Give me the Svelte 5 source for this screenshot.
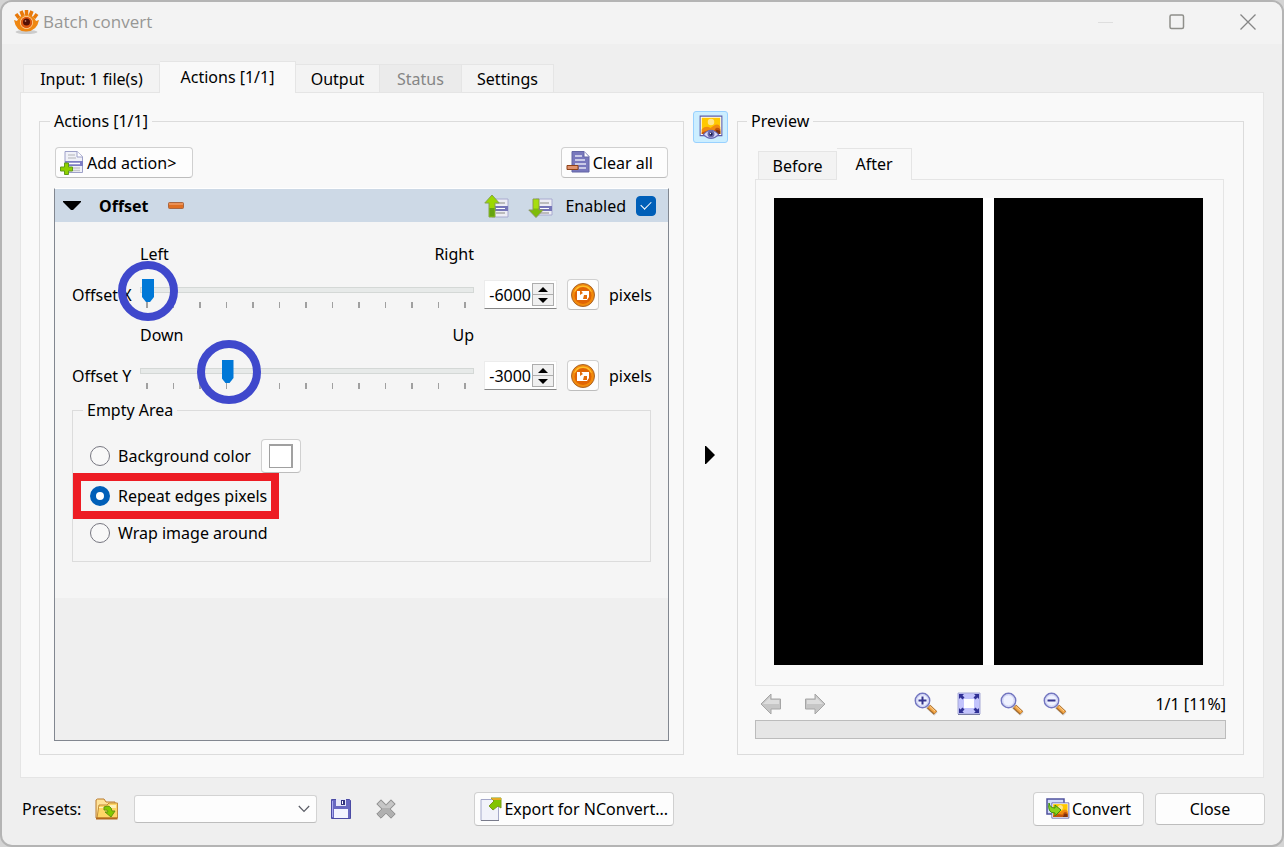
<script>
  let offsets = $state([
    { name: 'Offset X', low: 'Left', high: 'Right', value: -6000, mark: 'mark-x' },
    { name: 'Offset Y', low: 'Down', high: 'Up', value: -3000, mark: 'mark-y' }
  ]);
  let enabled = $state(true);
  let fill = $state('repeat');
  const ticks = Array.from({ length: 13 });
</script>

{#snippet page()}
  <path d="M5 1.5h12l5.5 5V22.500H5z" fill="#f0f1f8" stroke="#9da0c8" />
  <path d="M17 1.500V7h5.500" fill="#fff" stroke="#9da0c8" />
  <path d="M8 5h7M8 8h8M8 18h12M8 20.500h12" stroke="#c6c7cc" stroke-width="1.500" />
  <path d="M5 11h18v5H5z" fill="#7d7dc4" />
  <path d="M7 13.500h13" stroke="#fff" stroke-width="1.500" />
{/snippet}

{#snippet lens(sign)}
  <svg width="24" height="24" viewBox="0 0 24 24" fill="none" aria-hidden="true">
    <path d="M13 14l9 8" stroke="#d5d5d8" stroke-width="5" />
    <path d="M14.500 14.500l7 6.500" stroke="#a56b2b" stroke-width="5" />
    <path d="M15 14.500l6.500 6" stroke="#f2a443" stroke-width="3" />
    <path d="M16 14.500l5 4.600" stroke="#ffd69b" />
    <circle cx="8.500" cy="8.500" r="7.200" fill="#eff2ff" stroke="#7376c0" stroke-width="1.500" />
    <circle cx="8.500" cy="8.500" r="5.700" stroke="#c9cdf3" />
    {#if sign !== 'none'}<path d="M4.500 8.500h8" stroke="#35358d" stroke-width="2" />{/if}
    {#if sign === 'plus'}<path d="M8.500 4.500v8" stroke="#35358d" stroke-width="2" />{/if}
  </svg>
{/snippet}

{#snippet scene()}
  <path d="M1 1h20v18H1z" fill="#fff" stroke="#5d5da8" />
  <path d="M2.500 2.500h17v15h-17z" fill="#ffc800" />
  <circle cx="11" cy="6.500" r="3" fill="#ffe58a" />
  <path d="M2.500 13q4-4 8-1l3-2q4-3 6 1v6.500h-17z" fill="#f08a10" />
  <path d="M2.500 16l6-2 5 1 2-3q2-1 4 1v4.500h-17z" fill="#c4550c" />
  <path d="M14 17.500l2-4 3.500 1v3z" fill="#7e3410" />
{/snippet}

<div class="window">
  <header>
    <svg class="logo" width="25" height="26" viewBox="0 0 25 26" aria-hidden="true">
      <ellipse cx="12.500" cy="23" rx="11" ry="2" fill="#ccc" />
      <path d="M2 5l3 4M7 2l2 5M12.500 1v5M18 2l-2 5M23 5l-3 4" stroke="#e8790a" stroke-width="3.500" />
      <path d="M0 11l3 1Q5 6 12.500 6T22 12l3-1Q23 22 12.500 22.500T0 11z" fill="#ef8712" />
      <circle cx="12.500" cy="13.500" r="6.500" fill="#ffd9a0" />
      <circle cx="12.500" cy="13.500" r="5.700" fill="#dd5810" />
      <circle cx="12.500" cy="13" r="3.500" fill="#541006" />
      <circle cx="11.500" cy="12" r=".8" fill="#e6a484" />
    </svg>
    <h1>Batch convert</h1>
    <div class="wincontrols">
      <button aria-label="Minimize" disabled><svg width="16" height="16" viewBox="0 0 16 16"><path d="M0 8.500h15" stroke="#dedede" /></svg></button>
      <button aria-label="Maximize"><svg width="16" height="16" viewBox="0 0 16 16"><rect x="1" y="1" width="13.500" height="13.500" rx="1.500" fill="none" stroke="#8f8f8a" stroke-width="1.500" /></svg></button>
      <button aria-label="Close window"><svg width="16" height="16" viewBox="0 0 16 16"><path d="M.5.5l15 15M15.500.5l-15 15" stroke="#858585" stroke-width="1.300" /></svg></button>
    </div>
  </header>

  <main>
    <div class="tabs" role="tablist">
      <button role="tab" class="t1">Input: 1 file(s)</button>
      <button role="tab" class="t2 active" aria-selected="true">Actions [1/1]</button>
      <button role="tab" class="t3">Output</button>
      <button role="tab" class="t4" disabled>Status</button>
      <button role="tab" class="t5">Settings</button>
    </div>

    <div class="pane">
      <fieldset class="group actions">
        <legend>Actions [1/1]</legend>
        <div class="bar">
          <button class="btn">
            <svg width="25" height="25" viewBox="0 0 25 25" fill="none" aria-hidden="true">
              {@render page()}
              <path d="M4.500 13h4v4h4v4h-4v3.500h-4V21h-4v-4h4z" fill="#8fd000" stroke="#5f9a1a" />
            </svg>Add action&gt;
          </button>
          <button class="btn clear">
            <svg width="25" height="25" viewBox="0 0 25 25" fill="none" aria-hidden="true">
              <path d="M6 1.500h12l5 5V22H6z" fill="#7878bd" stroke="#6365a5" />
              <path d="M18 1.500V7h5" fill="#fff" stroke="#6365a5" />
              <path d="M9 6h7M9 10h10M9 14h11M13 18h7" stroke="#e4e5f5" stroke-width="1.500" />
              <path d="M1 15.500h11v4H1z" fill="#e0936f" stroke="#8e4218" />
            </svg>Clear all
          </button>
        </div>

        <div class="list">
          <div class="head">
            <button class="plain fold" aria-label="Collapse"><svg width="18" height="10" viewBox="0 0 18 10"><path d="M0 0h18v1l-8 8H8L0 1z" /></svg></button>
            <strong>Offset</strong>
            <button class="plain remove" aria-label="Remove action"><svg width="16" height="7" viewBox="0 0 16 7"><rect x=".5" y=".5" width="15" height="6" rx="1" fill="#df6f22" stroke="#a86742" /><path d="M1 2h14" stroke="#f6b287" /></svg></button>
            <span class="grow"></span>
            <button class="plain" aria-label="Move up">
              <svg width="26" height="24" viewBox="0 0 26 24" fill="none">
                <path d="M8 5h16v18H8z" fill="#ededf4" stroke="#a8aad0" /><path d="M12 9h9M12 19h9" stroke="#bcbcbc" stroke-width="2" /><path d="M10 12h14v5H10z" fill="#7676b8" /><path d="M12 14.500h9" stroke="#fff" />
                <path d="M5 23V9H.8L8 1l7.200 8H11v14z" fill="#9bd800" stroke="#84a34a" /><path d="M5.500 14h5v8.500h-5z" fill="#65a410" />
              </svg>
            </button>
            <button class="plain down" aria-label="Move down">
              <svg width="26" height="24" viewBox="0 0 26 24" fill="none">
                <path d="M8 5h16v16H8z" fill="#ededf4" stroke="#a8aad0" /><path d="M12 9h9M12 19h9" stroke="#bcbcbc" stroke-width="2" /><path d="M10 12h14v5H10z" fill="#7676b8" /><path d="M12 14.500h9" stroke="#fff" />
                <path d="M5 5v11H.8L8 23.500l7.200-7.500H11V5z" fill="#7ebc08" stroke="#8a9560" /><path d="M5.500 5.500h5v9h-5z" fill="#a7dd10" />
              </svg>
            </button>
            <label class="enabled">Enabled <input type="checkbox" bind:checked={enabled} /></label>
          </div>

          <div class="body">
            {#each offsets as o, i}
              <div class="offset">
                <div class="ends"><span>{o.low}</span><span>{o.high}</span></div>
                <label class="name" for="slider{i}">{o.name}</label>
                <div class="slide">
                  <input id="slider{i}" type="range" min="-6000" max="6000" bind:value={o.value} />
                  <div class="ticks">{#each ticks as _}<i></i>{/each}</div>
                  <span class="mark {o.mark}"></span>
                </div>
                <div class="spin">
                  <input type="number" aria-label="{o.name} in pixels" bind:value={o.value} />
                  <div class="steps">
                    <button aria-label="Increase {o.name}" onclick={() => (o.value += 1)}><svg width="10" height="5" viewBox="0 0 10 5"><path d="M5 0l5 5H0z" /></svg></button>
                    <button aria-label="Decrease {o.name}" onclick={() => (o.value -= 1)}><svg width="10" height="5" viewBox="0 0 10 5"><path d="M0 0h10L5 5z" /></svg></button>
                  </div>
                </div>
                <button class="btn reset" aria-label="Reset {o.name}" onclick={() => (o.value = 0)}>
                  <svg width="26" height="26" viewBox="0 0 26 26">
                    <circle cx="13" cy="13" r="11.500" fill="#f28a0c" stroke="#a9642a" />
                    <path d="M4 10a9.500 9.500 0 0 1 18 0q-9-4-18 0z" fill="#ffc02a" />
                    <circle cx="13" cy="13.500" r="8.500" fill="#e06405" />
                    <path d="M7 9h3v2l2-2h7v6l-2 3H7z" fill="#fff" />
                    <path d="M10 8l3 3-3 2zM14 13h3v4h-4z" fill="#e36b09" />
                  </svg>
                </button>
                <span>pixels</span>
              </div>
            {/each}

            <fieldset class="group empty">
              <legend>Empty Area</legend>
              <div class="option bg">
                <label><input type="radio" value="color" bind:group={fill} />Background color</label>
                <button class="btn swatch" aria-label="Choose background color"><i></i></button>
              </div>
              <div class="option marked"><label><input type="radio" value="repeat" bind:group={fill} />Repeat edges pixels</label></div>
              <div class="option"><label><input type="radio" value="wrap" bind:group={fill} />Wrap image around</label></div>
            </fieldset>
          </div>
        </div>
      </fieldset>

      <div class="splitter">
        <button class="toggle" aria-label="Show preview">
          <svg width="24" height="25" viewBox="0 0 22 23" fill="none">
            {@render scene()}
            <path d="M4 18q7-8 14 0q-7 7-14 0z" fill="#d6d8f8" stroke="#6868b4" />
            <circle cx="11" cy="17.500" r="3.200" fill="#6868ad" /><circle cx="11" cy="17.500" r="1.500" fill="#171747" />
            <circle cx="10.500" cy="17" r=".6" fill="#fff" />
          </svg>
        </button>
        <button class="plain expand" aria-label="Hide preview"><svg width="10" height="18" viewBox="0 0 10 18"><path d="M0 0h1l9 9-9 9H0z" /></svg></button>
      </div>

      <fieldset class="group preview">
        <legend>Preview</legend>
        <div class="tabs" role="tablist">
          <button role="tab" class="t6">Before</button>
          <button role="tab" class="t7 active" aria-selected="true">After</button>
        </div>
        <div class="view"><div class="picture"><i></i><i></i></div></div>
        <div class="tools">
          <button class="plain" aria-label="Previous" disabled><svg width="22" height="22" viewBox="0 0 22 22"><path d="M1 11L11 1v5h9.500v10H11v5z" fill="#c6c6c6" stroke="#a6a6a6" /><path d="M3 11l7-7v3h9v4z" fill="#ddd" /></svg></button>
          <button class="plain next" aria-label="Next" disabled><svg width="22" height="22" viewBox="0 0 22 22"><path d="M21 11L11 1v5H1.500v10H11v5z" fill="#c6c6c6" stroke="#a6a6a6" /><path d="M19 11l-7-7v3H3v4z" fill="#ddd" /></svg></button>
          <div class="zoom">
            <button class="plain" aria-label="Zoom in">{@render lens('plus')}</button>
            <button class="plain" aria-label="Fit">
              <svg width="24" height="24" viewBox="0 0 24 24">
                <path d="M1 1h22v21H1z" fill="#c3c4fc" stroke="#a7aad5" /><path d="M1 22.500h22" stroke="#777ba2" />
                <path d="M7 7h10v9H7z" fill="#fff" />
                <path d="M2 2h5L5.500 3.500l2 2-2 2-2-2L2 7zM22 2h-5l1.500 1.500-2 2 2 2 2-2L22 7zM2 21h5l-1.500-1.500 2-2-2-2-2 2L2 16zM22 21h-5l1.500-1.500-2-2 2-2 2 2L22 16z" fill="#303095" />
              </svg>
            </button>
            <button class="plain" aria-label="Actual size">{@render lens('none')}</button>
            <button class="plain" aria-label="Zoom out">{@render lens('minus')}</button>
          </div>
          <span class="status">1/1 [11%]</span>
        </div>
        <div class="progress" role="progressbar" aria-label="Progress" aria-valuenow="0"></div>
      </fieldset>
    </div>
  </main>

  <footer>
    <label for="preset">Presets:</label>
    <button class="plain folder" aria-label="Load preset">
      <svg width="24" height="22" viewBox="0 0 24 22">
        <path d="M1 20V2l1.500-1H9l2 3h9v4" fill="#ffe399" stroke="#b97a2d" />
        <path d="M4 7h8l2-2h8.500v15H2z" fill="#ffd666" stroke="#c18b3b" />
        <path d="M4 9h9l2-2h6v3H4z" fill="#fff1ba" />
        <path d="M1 20.500h21.500" stroke="#b3681b" stroke-width="2" />
        <path d="M9 9q7-3 8 4h3l-4 6-6-5h3q0-3-4-2z" fill="#83c900" stroke="#669410" />
      </svg>
    </button>
    <div class="combo">
      <select id="preset"><option></option></select>
      <svg width="12" height="8" viewBox="0 0 12 8" fill="none"><path d="M.8 1l5.200 5.500L11.200 1" stroke="#5b5d66" stroke-width="1.200" /></svg>
    </div>
    <button class="plain save" aria-label="Save preset">
      <svg width="20" height="20" viewBox="0 0 20 20">
        <path d="M.5.5h18l1 1v18H.5z" fill="#6868c0" stroke="#4b4ba4" />
        <path d="M5 0h10v7H5z" fill="#e6e7f8" /><path d="M10 1h4v5h-4z" fill="#34347f" /><path d="M11 2h1v3h-1z" fill="#fff" />
        <path d="M3 10h14v9H3z" fill="#f3f4ff" /><path d="M1.500 2v16" stroke="#aaaaf1" />
      </svg>
    </button>
    <button class="plain delete" aria-label="Delete preset" disabled>
      <svg width="20" height="20" viewBox="0 0 20 20"><path d="M5 .8l5 5 5-5L19.200 5l-5 5 5 5-4.200 4.200-5-5-5 5L.8 15l5-5-5-5z" fill="#b0b0b0" stroke="#8c8c8c" /><path d="M5 2l5 5 5-5 3 3-4 4H6L2 5z" fill="#c6c6c6" /></svg>
    </button>
    <button class="btn tall export">
      <svg width="22" height="24" viewBox="0 0 22 24">
        <path d="M1 2.500h17.500v21H1z" fill="#f1f2fa" stroke="#a4a8c9" /><path d="M1 23.500h18" stroke="#797b8b" />
        <path d="M11 1h10v10l-3-2-5 4-4-4 5-5z" fill="#82c400" stroke="#7b9a1e" /><path d="M11 1h10v2h-8z" fill="#e5ac22" />
      </svg>Export for NConvert...
    </button>
    <span class="grow"></span>
    <button class="btn tall convert">
      <svg width="24" height="22" viewBox="0 0 24 22" fill="none">
        <path d="M1 1h17v15H1z" fill="#d4dcfb" stroke="#4f519d" stroke-width="1.500" />
        <g transform="translate(5 4) scale(.85)">{@render scene()}</g>
        <path d="M3 5q1 5 6 5V7l6 5-6 6v-3Q1 15 3 5z" fill="#8bd41b" stroke="#3d8d10" />
      </svg>Convert
    </button>
    <button class="btn close">Close</button>
  </footer>
</div>

<style>
  :global(body) { background: #d4d4d4; }
  *, *::before, *::after { box-sizing: border-box; }
  .window {
    display: flex; flex-direction: column; min-height: 100vh;
    border: 2px solid #b4b4b4; border-radius: 12px; background: #efefef; overflow: hidden;
    font: 16px/20px "Noto Sans", "Open Sans", sans-serif; color: #000;
  }
  button, input, select { font: inherit; color: inherit; }
  button { padding: 0; }
  svg { display: block; flex: none; }
  header { display: flex; align-items: center; gap: 4px; height: 42px; padding: 0 26px 2px 12px; background: #f3f3f3; }
  h1 { margin: 0; font: 17px/22px "Open Sans", sans-serif; color: #979795; }
  .wincontrols { display: flex; gap: 55px; margin-left: auto; }
  .wincontrols button { border: 0; background: none; }
  main { flex: 1; display: flex; flex-direction: column; padding: 17px 18px 0; }
  .tabs { display: flex; align-items: flex-end; padding-left: 3px; height: 31px; }
  .tabs button {
    height: 28px; border: 1px solid #e5e5e5; border-left-width: 0; border-bottom: 0;
    background: #f3f3f3; text-align: center; white-space: nowrap;
  }
  .tabs button:first-child { border-left-width: 1px; }
  .tabs button:disabled { background: #ebebeb; color: #858585; }
  .tabs .active { position: relative; height: 32px; margin-bottom: -1px; background: #f9f9f9; padding-bottom: 2px; }
  .t1 { width: 137px; }
  .t2 { width: 136px; }
  .t3 { width: 84px; }
  .t4 { width: 82px; }
  .t5 { width: 92px; }
  .t6 { width: 79px; }
  .t7 { width: 75px; }
  .pane {
    flex: 1; display: grid; grid-template-columns: minmax(0, 645fr) 53px minmax(0, 507fr);
    padding: 18px 19px 22px 18px; border: 1px solid #e5e5e5; background: #f9f9f9;
  }
  .group { min-width: 0; margin: 0; padding: 0; border: 1px solid #dcdcdc; }
  legend { padding: 0 4px; line-height: 20px; }
  .actions { display: flex; flex-direction: column; padding: 16px 14px 13px; }
  .actions > legend { margin-left: -4px; }
  .bar { display: flex; justify-content: space-between; padding: 0 1px; }
  .btn {
    display: flex; align-items: center; gap: 2px; height: 31px; padding: 0 16px 0 4px;
    border: 1px solid #d0d0d0; border-bottom-color: #bdbdbd; border-radius: 4px; background: #fdfdfd; white-space: nowrap;
  }
  .clear { padding-right: 14px; }
  .plain { display: flex; align-items: center; border: 0; background: none; }
  .grow { flex: 1; }
  .list { flex: 1; margin-top: 10px; border: 1px solid #828790; border-top-color: #fff; background: #efefef; }
  .head { display: flex; align-items: center; height: 33px; padding: 0 12px 0 8px; background: #cdd9e6; }
  strong { margin: 0 19px 0 18px; }
  .down { margin: 0 11px 0 18px; }
  .enabled { display: flex; align-items: center; gap: 10px; }
  .enabled input {
    appearance: none; display: grid; place-items: center; width: 20px; height: 20px; margin: 0;
    border: 1px solid #8a8a8a; border-radius: 4px; background: #fff;
  }
  .enabled input:checked { border-color: #005fb8; background: #005fb8; }
  .enabled input:checked::before {
    content: ""; width: 10px; height: 6px; margin-bottom: 4px;
    border: solid #fff; border-width: 0 0 1px 1px; transform: rotate(-45deg);
  }
  .body { padding: 22px 17px 36px; background: #f5f5f5; }
  .offset {
    display: grid; grid-template-columns: 58px minmax(0, 1fr) 73px 32px 42px; column-gap: 10px;
    grid-template-rows: 20px 61px; align-items: center; white-space: nowrap;
  }
  .ends { grid-column: 2; display: flex; justify-content: space-between; }
  .name { grid-column: 1; }
  .slide { position: relative; height: 31px; }
  .slide::before { content: ""; position: absolute; top: 8px; width: 100%; height: 6px; border: 1px solid #d4d8d6; background: #e7eae9; }
  .slide input {
    appearance: none; position: relative; display: block; width: calc(100% - 4px); height: 23px;
    margin: 0 2px; background: none;
  }
  .slide input::-webkit-slider-thumb {
    appearance: none; width: 12px; height: 23px; border: 0; background: #0078d7;
    clip-path: polygon(0 0, 100% 0, 100% 78%, 67% 100%, 33% 100%, 0 78%);
  }
  .ticks { display: flex; justify-content: space-between; padding: 0 8px 0 6px; }
  .ticks i { width: 1px; height: 6px; background: #a0a0a0; }
  .ticks i:nth-child(odd) { width: 2px; }
  .mark { position: absolute; border: 8px solid #3f48cc; border-radius: 50%; pointer-events: none; }
  .mark-x { width: 60px; height: 60px; left: -22px; top: -18px; }
  .mark-y { width: 64px; height: 64px; left: 57px; top: -20px; }
  .spin { display: flex; height: 29px; padding: 2px; border: 1px solid #ececec; border-bottom-color: #868686; background: #fff; }
  .spin input { appearance: textfield; width: 44px; padding: 0; border: 0; background: none; text-align: right; outline: 0; }
  .spin input::-webkit-inner-spin-button { appearance: none; }
  .steps { display: flex; flex-direction: column; width: 22px; margin-left: auto; }
  .steps button { flex: 1; display: grid; place-items: center; border: 1px solid #adadad; background: #f0f0f0; }
  .steps button + button { border-top: 0; }
  .reset { padding: 0; justify-content: center; }
  .empty { margin-top: -6px; padding: 15px 17px 10px; }
  .empty > legend { margin-left: -7px; }
  .option { position: relative; display: flex; align-items: center; gap: 10px; height: 37px; }
  .option.bg { height: 42px; }
  .option label { display: flex; align-items: center; gap: 8px; white-space: nowrap; }
  .option input { appearance: none; width: 20px; height: 20px; margin: 0; border: 1px solid #767680; border-radius: 50%; background: #f8f8f8; }
  .option input:checked { border: 6px solid #005fb8; background: #fff; }
  .marked::after {
    content: ""; position: absolute; left: -17px; top: -4px; width: 206px; height: 46px;
    border: 8px solid #ed1c24; pointer-events: none;
  }
  .swatch { width: 40px; height: 34px; padding: 0; justify-content: center; }
  .swatch i { width: 24px; height: 24px; border: 1px solid #a0a0a0; border-width: 2px 2px 1px 1px; background: #fff; }
  .splitter { display: flex; flex-direction: column; align-items: center; }
  .toggle { display: grid; place-items: center; width: 35px; height: 32px; border: 1px solid #99d1ff; border-radius: 3px; background: #cceeff; }
  .expand { margin: auto; padding: 12px 2px 0 0; }
  .preview { display: flex; flex-direction: column; padding: 17px 17px 15px; }
  .preview > legend { margin-left: -8px; }
  .view { flex: 1; display: flex; margin-right: 2px; padding: 18px 20px 20px 18px; border: 1px solid #e5e5e5; }
  .picture { flex: 1; display: flex; gap: 11px; background: #fff; }
  .picture i { flex: 1; background: #000; }
  .tools { display: flex; align-items: center; height: 34px; padding: 2px 0 0 5px; }
  .next { margin-left: 22px; }
  .zoom { display: flex; gap: 19px; margin: 0 auto 0 88px; }
  .progress { height: 19px; border: 1px solid #bcbcbc; background: #e6e6e6; }
  footer { display: flex; align-items: center; height: 67px; padding: 0 17px 6px 20px; }
  .folder { margin: 0 15px 0 14px; }
  .combo { display: grid; align-items: center; width: 183px; }
  .combo > * { grid-area: 1 / 1; }
  .combo svg { justify-self: end; margin-right: 7px; pointer-events: none; }
  select { appearance: none; width: 100%; height: 28px; padding: 0 24px 0 8px; border: 1px solid #d3d3d3; border-bottom-color: #bdbdbd; border-radius: 3px; background: #fdfdfd; }
  .save { margin: 0 25px 0 14px; }
  .export { width: 200px; margin-left: 78px; padding: 0 0 0 5px; }
  .tall { height: 34px; }
  .convert { width: 111px; margin-right: 11px; padding: 0; justify-content: center; }
  .close { width: 110px; height: 32px; padding: 0; justify-content: center; }
</style>
